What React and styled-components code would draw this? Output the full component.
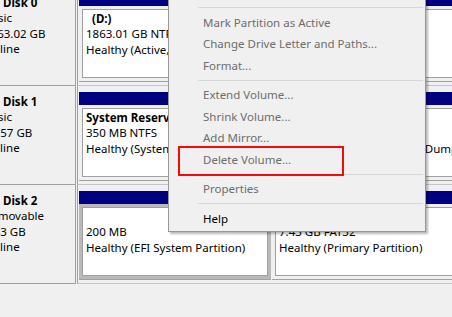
import React from 'react';
import styled, { createGlobalStyle } from 'styled-components';

const GlobalStyle = createGlobalStyle`
  html, body {
    margin: 0;
    padding: 0;
    background: #f0f0f0;
    overflow: hidden;
  }
  body {
    font-family: "Noto Sans", "Open Sans", sans-serif;
    font-size: 11.5px;
    color: #000;
  }
`;

const Viewport = styled.div`
  position: relative;
  width: 452px;
  height: 317px;
  overflow: hidden;
  background: #f0f0f0;
`;

const DiskList = styled.div`
  width: 540px;
  margin: -13px 0 0 -16px;
`;

const DiskRow = styled.div`
  display: flex;
  height: 99px;
`;

const DiskLabel = styled.div`
  box-sizing: border-box;
  flex: none;
  width: 92px;
  padding-top: 8px;
  border-right: 1px solid #a0a0a0;
  border-bottom: 1px solid #a0a0a0;
  line-height: 15.3px;
  white-space: nowrap;
  overflow: hidden;
`;

const DiskName = styled.div`
  padding-left: 19px;
  font-weight: 700;
`;

const LabelLine = styled.div``;

const PartitionStrip = styled.div`
  box-sizing: border-box;
  flex: 1;
  display: flex;
  gap: 1px;
  margin-left: 1px;
  padding: 6px 0 3px 1px;
  border-left: 1px solid #a0a0a0;
  border-bottom: 1px solid #c4c4c4;
  min-width: 0;
`;

const Partition = styled.div`
  box-sizing: border-box;
  display: flex;
  flex-direction: column;
  flex: ${(p) => (p.$width ? 'none' : '1 1 0')};
  width: ${(p) => (p.$width ? `${p.$width}px` : 'auto')};
  min-width: 0;
  border-bottom: 1px solid #a0a0a0;
`;

const TypeBar = styled.div`
  flex: none;
  height: 13px;
  background: #000080;
`;

const Frame = styled.div`
  flex: 1;
  display: flex;
  padding: 3px;
  min-width: 0;
  background: ${(p) => (p.$selected ? '#b9b9b9' : 'transparent')};
`;

const VolumeBox = styled.div`
  box-sizing: border-box;
  flex: 1;
  min-width: 0;
  padding: 1px 0 0 3px;
  background: #fff;
  border: 1px solid #a0a0a0;
  line-height: 15.3px;
  white-space: nowrap;
  overflow: hidden;
`;

const VolumeName = styled.div`
  font-weight: 700;
  padding-left: ${(p) => (p.$indent ? '6px' : '0')};
  min-height: 15.3px;
`;

const VolumeLine = styled.div``;

const ContextMenu = styled.ul`
  position: absolute;
  left: 168px;
  top: -44px;
  box-sizing: border-box;
  width: 258px;
  margin: 0;
  padding: 3px 2px 2px 2px;
  list-style: none;
  background: #f0f0f0;
  border: 1px solid #979797;
  box-shadow: 2px 2px 2px rgba(0, 0, 0, 0.28);
`;

const MenuItem = styled.li`
  box-sizing: border-box;
  height: 21.5px;
  padding: 1.5px 0 0 32px;
  line-height: 20px;
  white-space: nowrap;
  color: ${(p) => (p.$disabled ? '#6d6d6d' : '#000')};
`;

const MenuSeparator = styled.li`
  box-sizing: border-box;
  height: 8px;
  padding: 4px 0 0 27px;
  &::after {
    content: '';
    display: block;
    height: 1px;
    background: #d7d7d7;
  }
`;

const Highlight = styled.div`
  position: absolute;
  left: 178px;
  top: 146px;
  width: 166px;
  height: 30px;
  box-sizing: border-box;
  border: 2px solid #f20d0d;
  pointer-events: none;
`;

const disks = [
  {
    name: 'Disk 0',
    lines: ['Basic', '1863.02 GB', 'Online'],
    partitions: [
      { name: '(D:)', indent: true, lines: ['1863.01 GB NTFS', 'Healthy (Active, Primary Partition)'] },
    ],
  },
  {
    name: 'Disk 1',
    lines: ['Basic', '59.57 GB', 'Online'],
    partitions: [
      { name: 'System Reserved', width: 170, lines: ['350 MB NTFS', 'Healthy (System, Active, Primary Partition)'] },
      { name: '(C:)', indent: true, lines: ['59.22 GB NTFS', 'Healthy (Boot, Page File, Crash Dump, Primary Partition)'] },
    ],
  },
  {
    name: 'Disk 2',
    lines: ['Removable', '7.63 GB', 'Online'],
    partitions: [
      { name: '', width: 192, selected: true, lines: ['200 MB', 'Healthy (EFI System Partition)'] },
      { name: '', lines: ['7.43 GB FAT32', 'Healthy (Primary Partition)'] },
    ],
  },
];

const menu = [
  { label: 'Open', disabled: false },
  { label: 'Explore', disabled: false },
  'sep',
  { label: 'Mark Partition as Active', disabled: true },
  { label: 'Change Drive Letter and Paths...', disabled: true },
  { label: 'Format...', disabled: true },
  'sep',
  { label: 'Extend Volume...', disabled: true },
  { label: 'Shrink Volume...', disabled: true },
  { label: 'Add Mirror...', disabled: true },
  { label: 'Delete Volume...', disabled: true },
  'sep',
  { label: 'Properties', disabled: true },
  'sep',
  { label: 'Help', disabled: false },
];

export default function App() {
  return (
    <>
      <GlobalStyle />
      <Viewport>
        <DiskList>
          {disks.map((disk) => (
            <DiskRow key={disk.name}>
              <DiskLabel>
                <DiskName>{disk.name}</DiskName>
                {disk.lines.map((l) => (
                  <LabelLine key={l}>{l}</LabelLine>
                ))}
              </DiskLabel>
              <PartitionStrip>
                {disk.partitions.map((p, i) => (
                  <Partition key={i} $width={p.width}>
                    <TypeBar />
                    <Frame $selected={p.selected}>
                      <VolumeBox>
                        <VolumeName $indent={p.indent}>{p.name || '\u00a0'}</VolumeName>
                        {p.lines.map((l) => (
                          <VolumeLine key={l}>{l}</VolumeLine>
                        ))}
                      </VolumeBox>
                    </Frame>
                  </Partition>
                ))}
              </PartitionStrip>
            </DiskRow>
          ))}
        </DiskList>
        <ContextMenu>
          {menu.map((m, i) =>
            m === 'sep' ? (
              <MenuSeparator key={i} />
            ) : (
              <MenuItem key={i} $disabled={m.disabled}>
                {m.label}
              </MenuItem>
            )
          )}
        </ContextMenu>
        <Highlight />
      </Viewport>
    </>
  );
}
